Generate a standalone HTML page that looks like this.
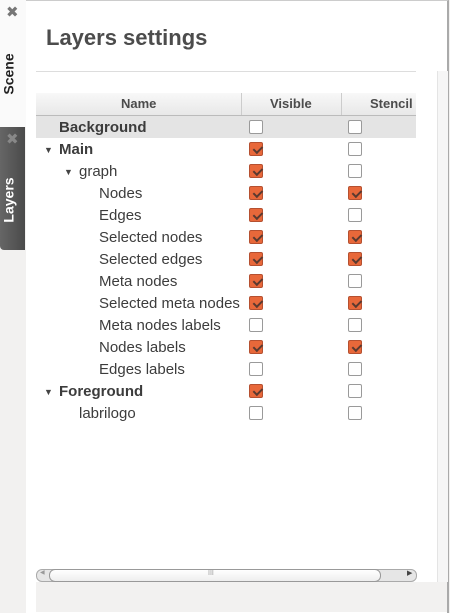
<!DOCTYPE html><html><head><style>
body{margin:0;width:450px;height:612px;background:#f2f1f0;font-family:"Liberation Sans","DejaVu Sans",sans-serif;position:relative;overflow:hidden}
.a{position:absolute}
.vt{position:absolute;transform:rotate(-90deg);transform-origin:center;font-weight:bold;font-size:14px;white-space:nowrap}
.row{position:absolute;left:36px;width:380px;height:22px;font-size:15px;color:#3c3c3c;line-height:22px}
.row span.a{top:1px}
.cb{position:absolute;top:4px;width:12px;height:12px;border:1px solid #9a9a9a;border-radius:2px;background:#fff}
.on{background:#e8683a;border-color:#b55030}
.on::after{content:"";position:absolute;left:2px;top:0px;width:7px;height:4px;border-left:2px solid #5a3a30;border-bottom:2px solid #5a3a30;transform:rotate(-45deg) translate(-1px,3px)}
.tri{position:absolute;top:1px;font-size:9px;color:#444}
</style></head><body>
<div class="a" style="left:0;top:0;width:26px;height:127px;background:#fafafa;border-right:1px solid #ccc"></div>
<div class="a" style="left:6px;top:3px;font-size:15px;color:#777;font-weight:bold">✖</div>
<div class="vt" style="left:-12px;top:66px;color:#222">Scene</div>
<div class="a" style="left:0;top:127px;width:25px;height:123px;background:linear-gradient(90deg,#666,#4a4a4a);border-radius:0 0 0 4px"></div>
<div class="a" style="left:6px;top:130px;font-size:15px;color:#888;font-weight:bold">✖</div>
<div class="vt" style="left:-14px;top:192px;color:#fff">Layers</div>
<div class="a" style="left:26px;top:0;width:421px;height:612px;background:#fff;border-top:1px solid #ccc;border-right:2px solid #aaa"></div>
<div class="a" style="left:437px;top:71px;width:10px;height:511px;background:#f6f6f6;border-left:1px solid #e4e4e4"></div>
<div class="a" style="left:36px;top:582px;width:411px;height:30px;background:#f2f1f0"></div>
<div class="a" style="left:46px;top:25px;font-size:22px;font-weight:bold;color:#4c4c4c">Layers settings</div>
<div class="a" style="left:36px;top:71px;width:380px;height:1px;background:#ddd"></div>
<div class="a" style="left:36px;top:93px;width:380px;height:22px;background:linear-gradient(#f8f8f8,#e8e8e8);border-bottom:1px solid #bbb;font-size:13px;font-weight:bold;color:#4c4c4c;line-height:22px;overflow:hidden">
<span class="a" style="left:85px">Name</span><span class="a" style="left:205px;top:0;width:1px;height:22px;background:#ccc"></span>
<span class="a" style="left:234px">Visible</span><span class="a" style="left:305px;top:0;width:1px;height:22px;background:#ccc"></span>
<span class="a" style="left:334px">Stencil</span></div>
<div class="row" style="top:116px;background:#e4e4e4;font-weight:bold"><span class="a" style="left:23px">Background</span><i class="cb" style="left:213px"></i><i class="cb" style="left:312px"></i></div>
<div class="row" style="top:138px;font-weight:bold"><span class="tri" style="left:8px">▼</span><span class="a" style="left:23px">Main</span><i class="cb on" style="left:213px"></i><i class="cb" style="left:312px"></i></div>
<div class="row" style="top:160px"><span class="tri" style="left:28px">▼</span><span class="a" style="left:43px">graph</span><i class="cb on" style="left:213px"></i><i class="cb" style="left:312px"></i></div>
<div class="row" style="top:182px"><span class="a" style="left:63px">Nodes</span><i class="cb on" style="left:213px"></i><i class="cb on" style="left:312px"></i></div>
<div class="row" style="top:204px"><span class="a" style="left:63px">Edges</span><i class="cb on" style="left:213px"></i><i class="cb" style="left:312px"></i></div>
<div class="row" style="top:226px"><span class="a" style="left:63px">Selected nodes</span><i class="cb on" style="left:213px"></i><i class="cb on" style="left:312px"></i></div>
<div class="row" style="top:248px"><span class="a" style="left:63px">Selected edges</span><i class="cb on" style="left:213px"></i><i class="cb on" style="left:312px"></i></div>
<div class="row" style="top:270px"><span class="a" style="left:63px">Meta nodes</span><i class="cb on" style="left:213px"></i><i class="cb" style="left:312px"></i></div>
<div class="row" style="top:292px"><span class="a" style="left:63px">Selected meta nodes</span><i class="cb on" style="left:213px"></i><i class="cb on" style="left:312px"></i></div>
<div class="row" style="top:314px"><span class="a" style="left:63px">Meta nodes labels</span><i class="cb" style="left:213px"></i><i class="cb" style="left:312px"></i></div>
<div class="row" style="top:336px"><span class="a" style="left:63px">Nodes labels</span><i class="cb on" style="left:213px"></i><i class="cb on" style="left:312px"></i></div>
<div class="row" style="top:358px"><span class="a" style="left:63px">Edges labels</span><i class="cb" style="left:213px"></i><i class="cb" style="left:312px"></i></div>
<div class="row" style="top:380px;font-weight:bold"><span class="tri" style="left:8px">▼</span><span class="a" style="left:23px">Foreground</span><i class="cb on" style="left:213px"></i><i class="cb" style="left:312px"></i></div>
<div class="row" style="top:402px"><span class="a" style="left:43px">labrilogo</span><i class="cb" style="left:213px"></i><i class="cb" style="left:312px"></i></div>
<div class="a" style="left:36px;top:569px;width:379px;height:11px;border:1px solid #aaa;border-radius:6px;background:#e6e6e6"></div>
<div class="a" style="left:49px;top:569px;width:330px;height:11px;border:1px solid #999;border-radius:6px;background:linear-gradient(#fff,#eee)"></div>
<div class="a" style="left:208px;top:570px;font-size:7px;color:#999">III</div>
<div class="a" style="left:407px;top:569px;font-size:7px;color:#444">▶</div>
<div class="a" style="left:40px;top:569px;font-size:6px;color:#999">◀</div>
</body></html>
